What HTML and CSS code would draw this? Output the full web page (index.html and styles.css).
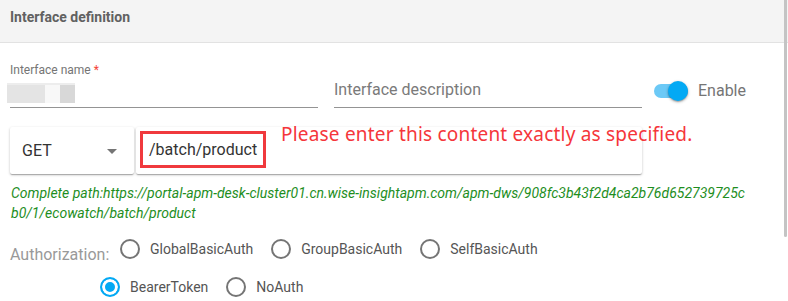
FILE: index.html
```html
<!DOCTYPE html>
<html lang="en">
<head>
<meta charset="utf-8">
<title>Interface definition</title>
<link rel="stylesheet" href="styles.css">
</head>
<body>
<div class="scrollthumb"></div>
<header class="panel-head">Interface definition</header>
<main class="panel-body">
  <div class="row-fields">
    <div class="field field-name">
      <div class="field-label">Interface name <span class="req">*</span></div>
      <div class="blurred"><span class="b1"></span><span class="b2"></span><span class="b3"></span></div>
    </div>
    <div class="field field-desc">
      <div class="placeholder">Interface description</div>
    </div>
    <div class="switch">
      <span class="track"><span class="thumb"></span></span>
      <span class="switch-text">Enable</span>
    </div>
  </div>

  <div class="row-request">
    <div class="card method"><span>GET</span><span class="caret"></span></div>
    <div class="card path">
      <span class="path-value">/batch/product</span>
      <span class="note">Please enter this content exactly as specified.</span>
    </div>
  </div>

  <div class="fullpath">Complete path:https://portal-apm-desk-cluster01.cn.wise-insightapm.com/apm-dws/908fc3b43f2d4ca2b76d652739725c<br>b0/1/ecowatch/batch/product</div>

  <div class="auth">
    <div class="auth-row">
      <span class="auth-label">Authorization:</span>
      <span class="option"><span class="radio"></span>GlobalBasicAuth</span>
      <span class="option"><span class="radio"></span>GroupBasicAuth</span>
      <span class="option"><span class="radio"></span>SelfBasicAuth</span>
    </div>
    <div class="auth-row second">
      <span class="option"><span class="radio checked"></span>BearerToken</span>
      <span class="option"><span class="radio"></span>NoAuth</span>
    </div>
  </div>
</main>
</body>
</html>
```

FILE: styles.css
```css
html, body {
  margin: 0;
  padding: 0;
  background: #fff;
}
body {
  font-family: Roboto, "Liberation Sans", sans-serif;
  color: #333;
  overflow: hidden;
}

.scrollthumb {
  position: fixed;
  top: 0;
  right: 1px;
  width: 3px;
  height: 237px;
  background: #c4c4c4;
  border-radius: 0 0 2px 2px;
}

.panel-head {
  height: 43px;
  box-sizing: border-box;
  padding: 9px 10px 0;
  font-size: 14px;
  line-height: 16px;
  font-weight: 700;
  color: #616161;
  background: #f4f4f4;
  border-bottom: 1px solid #e2e2e2;
}

.panel-body {
  padding: 0 14px 0 10px;
}

/* first row */
.row-fields {
  display: flex;
  align-items: flex-start;
  margin-top: 20px;
}
.field {
  width: 308px;
  height: 44px;
  border-bottom: 1px solid #949494;
  margin-right: 16px;
}
.field-desc {
  margin-right: 12px;
}
.field-label {
  font-size: 12px;
  line-height: 14px;
  color: #757575;
}
.req {
  color: #f44336;
}
.blurred {
  display: flex;
  align-items: flex-end;
  height: 23px;
  margin: 3px 0 0 -3px;
  background: linear-gradient(#fff 0, #fff 3px, #ededed 3px, #ededed 5px, transparent 5px);
  width: 68px;
  filter: blur(0.6px);
}
.blurred span {
  display: block;
  height: 18px;
}
.b1 { width: 38px; background: #e4e4e4; }
.b2 { width: 15px; background: #f8f8f8; }
.b3 { width: 15px; background: #d8d8d8; }

.placeholder {
  margin-top: 17px;
  font-size: 16px;
  line-height: 20px;
  color: #7a7a7a;
}

.switch {
  display: flex;
  align-items: center;
  height: 20px;
  margin-top: 18px;
}
.track {
  position: relative;
  width: 34px;
  height: 14px;
  border-radius: 7px;
  background: #6cc9f6;
}
.thumb {
  position: absolute;
  right: 0;
  top: -3px;
  width: 20px;
  height: 20px;
  border-radius: 50%;
  background: #03a9f4;
  box-shadow: 0 1px 3px rgba(0,0,0,0.35), 0 1px 1px rgba(0,0,0,0.14);
}
.switch-text {
  margin-left: 10px;
  font-size: 16px;
  line-height: 20px;
  color: #757575;
}

/* request row */
.row-request {
  display: flex;
  margin-top: 19px;
}
.card {
  height: 47px;
  box-sizing: border-box;
  background: #fff;
  border-radius: 2px;
  box-shadow: 0 1px 3px rgba(0,0,0,0.2), 0 1px 1px rgba(0,0,0,0.14), 0 2px 1px -1px rgba(0,0,0,0.12);
}
.method {
  width: 124px;
  margin-right: 2px;
  display: flex;
  align-items: center;
  justify-content: space-between;
  padding: 0 17px 0 12px;
  font-size: 16px;
  color: #333;
}
.caret {
  width: 0;
  height: 0;
  border-left: 5px solid transparent;
  border-right: 5px solid transparent;
  border-top: 5px solid #757575;
  margin-top: 2px;
}
.path {
  position: relative;
  width: 506px;
  padding: 4px 0 0 4px;
}
.path-value {
  display: inline-block;
  border: 3px solid #f0393d;
  padding: 0 6px;
  font-size: 16px;
  line-height: 31px;
  color: #333;
}
.note {
  position: absolute;
  left: 145px;
  top: -5px;
  white-space: nowrap;
  font-family: "Noto Sans", "Liberation Sans", sans-serif;
  font-size: 19px;
  letter-spacing: 0.2px;
  line-height: 24px;
  color: #f5363b;
}

/* full path */
.fullpath {
  margin-top: 9px;
  padding-left: 1px;
  font-size: 14px;
  line-height: 20px;
  font-style: italic;
  color: #1e8e1e;
  white-space: nowrap;
}

/* authorization */
.auth {
  margin-top: 16px;
}
.auth-row {
  display: flex;
  align-items: flex-start;
  height: 20px;
}
.auth-row.second {
  margin-top: 18px;
  padding-left: 90px;
}
.auth-label {
  width: 110px;
  margin-top: 6px;
  font-size: 16px;
  line-height: 20px;
  color: #999;
}
.option {
  display: flex;
  align-items: center;
  margin-right: 18px;
  font-size: 14px;
  line-height: 20px;
  color: #555;
}
.radio {
  width: 20px;
  height: 20px;
  box-sizing: border-box;
  border: 2px solid #757575;
  border-radius: 50%;
  margin-right: 10px;
}
.radio.checked {
  border-color: #03a9f4;
  background: #03a9f4;
  box-shadow: inset 0 0 0 3px #fff;
}
```
